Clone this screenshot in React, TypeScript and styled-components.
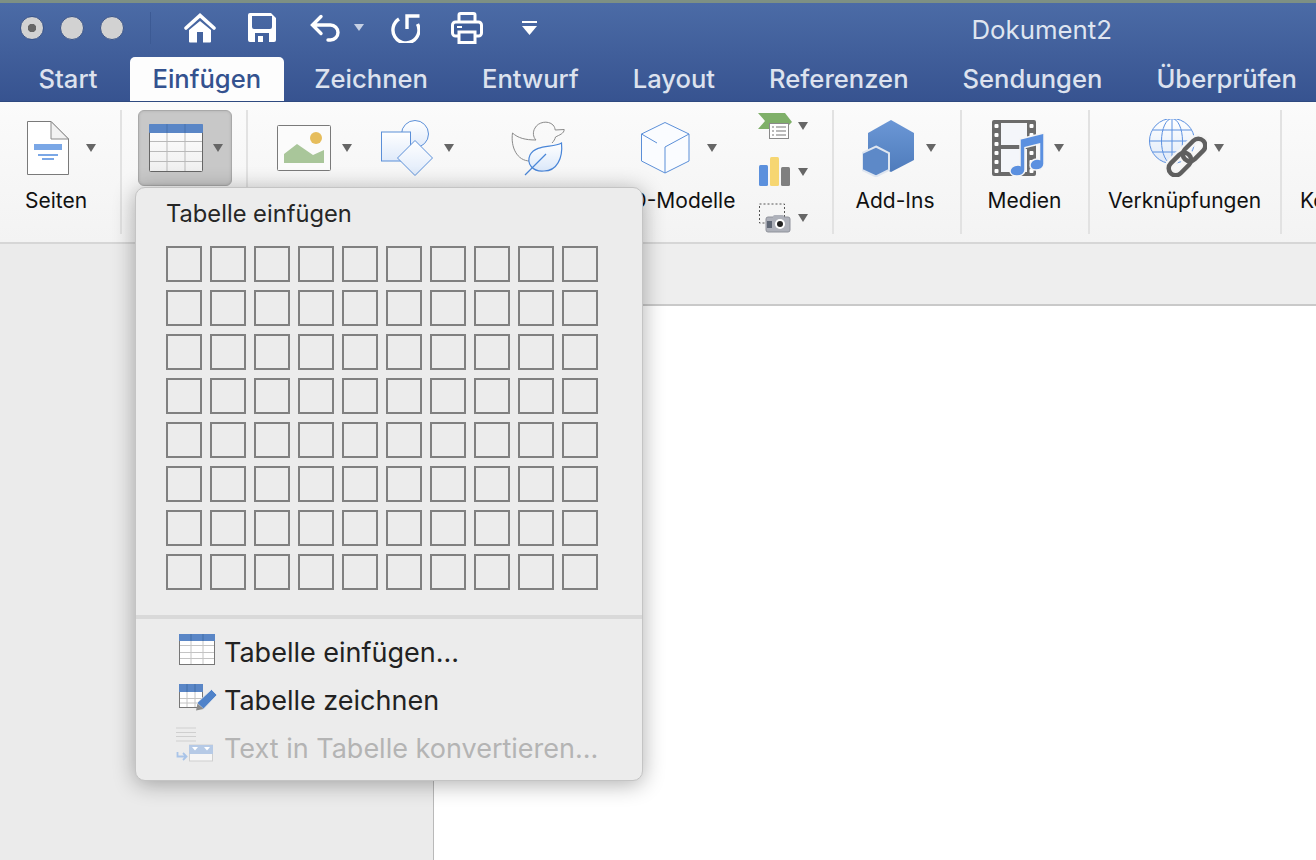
import React from "react";
import styled, { createGlobalStyle } from "styled-components";

const tabs = ["Start", "Einfügen", "Zeichnen", "Entwurf", "Layout", "Referenzen", "Sendungen", "Überprüfen"];
const cells = Array.from({ length: 80 }, (_, i) => i);

const HomeIcon = () => (
  <svg width="32" height="30" viewBox="0 0 32 30">
    <path d="M2 15 16 2.500 30 15" fill="none" stroke="#fff" strokeWidth="3.600" strokeLinecap="round" />
    <path d="M5 17 16 8l11 9v11.500a1 1 0 0 1-1 1h-7V19h-6v10.500H6a1 1 0 0 1-1-1z" fill="#fff" />
  </svg>
);

const SaveIcon = () => (
  <svg width="28" height="29" viewBox="0 0 28 29">
    <path
      fillRule="evenodd"
      d="M2 0h21l5 5v22a2 2 0 0 1-2 2H2a2 2 0 0 1-2-2V2a2 2 0 0 1 2-2zM4 3v11a2 2 0 0 0 2 2h16a2 2 0 0 0 2-2V3zM7 20v9h14v-9zM10 23h5v6h-5z"
      fill="#fff"
    />
  </svg>
);

const UndoIcon = () => (
  <svg width="30" height="28" viewBox="0 0 30 28">
    <path
      d="M11 2.500 2.500 11l8.500 8.500M3 11h17.500a7.500 7.500 0 0 1 0 15H18"
      fill="none"
      stroke="#fff"
      strokeWidth="3.400"
      strokeLinecap="round"
    />
  </svg>
);

const RedoIcon = () => (
  <svg width="30" height="30" viewBox="0 0 30 30">
    <path d="M9 6A13 13 0 1 0 27.500 11" fill="none" stroke="#fff" strokeWidth="3.400" />
    <path d="M29.500 3H17v13" fill="none" stroke="#fff" strokeWidth="3.400" />
  </svg>
);

const PrintIcon = () => (
  <svg width="32" height="32" viewBox="0 0 32 32">
    <rect x="8" y="1.500" width="16" height="11" rx="1.500" fill="none" stroke="#fff" strokeWidth="3" />
    <rect x="1.500" y="10" width="29" height="14" rx="3" fill="#3f5e9a" stroke="#fff" strokeWidth="3" />
    <rect x="6" y="14" width="5" height="2" fill="#fff" />
    <rect x="8" y="20" width="16" height="10.500" fill="#3f5e9a" stroke="#fff" strokeWidth="3" />
  </svg>
);

const CustomizeIcon = () => (
  <svg width="15" height="14" viewBox="0 0 15 14">
    <rect x="0" y="0" width="15" height="2" fill="#fff" />
    <path d="M0 5h15l-7.500 9z" fill="#fff" />
  </svg>
);

const PageIcon = () => (
  <svg width="42" height="54" viewBox="0 0 42 54">
    <path d="M.5.500H24L41.500 18v35.500H.5z" fill="#fff" stroke="#7a7a7a" />
    <path d="M24 .5V18h17.500z" fill="#f2f2f2" stroke="#8a8a8a" />
    <rect x="7" y="23" width="28" height="6" fill="#7aa7e6" />
    <rect x="11" y="33" width="20" height="2" fill="#7aa7e6" />
    <rect x="15" y="37" width="12" height="2" fill="#7aa7e6" />
  </svg>
);

const TableIcon = () => (
  <svg width="54" height="48" viewBox="0 0 54 48">
    <defs>
      <linearGradient id="cellFill" x1="0" y1="0" x2="0" y2="1">
        <stop offset="0" stopColor="#fff" />
        <stop offset="1" stopColor="#efefef" />
      </linearGradient>
    </defs>
    <rect x=".5" y=".5" width="53" height="47" rx="1" fill="url(#cellFill)" stroke="#666" />
    <rect x="0" y="0" width="54" height="9" rx="1" fill="#5a86c6" />
    <path d="M18 9v38M36 9v38M1 17.500h52M1 27.500h52M1 37.500h52" stroke="#b9b9b9" strokeWidth="1" />
    <path d="M18 0v9M36 0v9" stroke="#4872ad" strokeWidth="1" />
  </svg>
);

const PictureIcon = () => (
  <svg width="54" height="46" viewBox="0 0 54 46">
    <rect x=".5" y=".5" width="53" height="45" rx="1" fill="#fbfbfb" stroke="#7a7a7a" />
    <path d="M7 29 20 19l16 11 11-5v13H7z" fill="#a9c69a" />
    <circle cx="39" cy="13" r="6" fill="#e6bd5c" />
  </svg>
);

const ShapesIcon = () => (
  <svg width="52" height="56" viewBox="0 0 52 56">
    <defs>
      <linearGradient id="shapeFill" x1="0" y1="0" x2="0" y2="1">
        <stop offset="0" stopColor="#fff" />
        <stop offset="1" stopColor="#dfeafa" />
      </linearGradient>
    </defs>
    <circle cx="34" cy="14" r="13.500" fill="url(#shapeFill)" stroke="#5b8fd8" />
    <rect x=".5" y="12" width="29" height="29" fill="url(#shapeFill)" stroke="#5b8fd8" />
    <path d="M34 20.500 51.500 38 34 55.500 16.500 38z" fill="url(#shapeFill)" stroke="#5b8fd8" />
  </svg>
);

const DuckIcon = () => (
  <svg width="54" height="56" viewBox="0 0 54 56">
    <defs>
      <linearGradient id="leafFill" x1="0" y1="0" x2="0" y2="1">
        <stop offset="0" stopColor="#fff" />
        <stop offset="1" stopColor="#dbe8fa" />
      </linearGradient>
    </defs>
    <path
      d="M1.500 13C7 18 14 20 25 20c-3-3-3.500-8-1-12 3-6 13-8 18-3 1.500 1.500 2 3.500 2.200 5l9-.5c0 4-5 5.500-8.700 7.500-.5 2-1.500 4-3.500 6M1.500 13C-.5 27 6 41 19 41"
      fill="none"
      stroke="#8a8a8a"
    />
    <path d="M50.500 23C42 28 25 24 19 35c-4 9 3 17 14 16 13 0 19-13 17.500-28z" fill="url(#leafFill)" stroke="#4a86d8" strokeWidth="1.200" />
    <path d="M14 55 26 43c3-3 6-6 9-9" fill="none" stroke="#4a86d8" strokeWidth="1.200" />
  </svg>
);

const CubeIcon = () => (
  <svg width="49" height="52" viewBox="0 0 49 52">
    <path d="M24 .5 48 12v27L24 51 .5 39V12z" fill="#fafcff" stroke="#5b8fd8" />
    <path d="M48 12 24 25v26M.5 12 16 21" fill="none" stroke="#5b8fd8" />
  </svg>
);

const SmartArtIcon = () => (
  <svg width="34" height="28" viewBox="0 0 34 28">
    <path d="M0 1h27l7 9-7 7H0l7-8z" fill="#7fb069" />
    <rect x="11.500" y="11.500" width="19" height="15" fill="#fff" stroke="#8a8a8a" />
    <path d="M14 15h2M18 15h10M14 19h2M18 19h10M14 23h2M18 23h10" stroke="#777" strokeWidth="1.200" />
  </svg>
);

const ChartIcon = () => (
  <svg width="32" height="30" viewBox="0 0 32 30">
    <rect x="1" y="8" width="9" height="21" rx="1.500" fill="#5b90dd" />
    <rect x="12" y="0" width="9" height="29" rx="1.500" fill="#f6d672" />
    <rect x="23" y="10" width="9" height="19" rx="1.500" fill="#7f7f7f" />
  </svg>
);

const ScreenshotIcon = () => (
  <svg width="33" height="30" viewBox="0 0 33 30">
    <rect x="1.500" y="1" width="25" height="19" fill="none" stroke="#555" strokeDasharray="2 2" />
    <rect x="8" y="14" width="24" height="15" rx="2" fill="#aeb1ba" stroke="#8f929b" />
    <rect x="15" y="12" width="11" height="4" rx="1.500" fill="#aeb1ba" />
    <rect x="9" y="18" width="5" height="7" fill="#5e6674" />
    <circle cx="22" cy="21" r="5" fill="#fff" />
    <circle cx="22" cy="21" r="3" fill="#222" />
  </svg>
);

const AddInsIcon = () => (
  <svg width="52" height="57" viewBox="0 0 52 57">
    <defs>
      <linearGradient id="hexFill" x1="0" y1="0" x2="0" y2="1">
        <stop offset="0" stopColor="#6b97d6" />
        <stop offset="1" stopColor="#4f7cbc" />
      </linearGradient>
    </defs>
    <path d="M29 0 52 13v27L29 52 6 40V13z" fill="url(#hexFill)" />
    <path d="M14 26.500 27 33v17l-13 6.500L0 50V33z" fill="#5d89c8" stroke="#dfe6f0" strokeWidth="2" />
  </svg>
);

const MediaIcon = () => (
  <svg width="53" height="56" viewBox="0 0 53 56">
    <rect x="0" y="0" width="44" height="56" rx="2" fill="#6b6b6b" />
    <rect x="9" y="3" width="26" height="22" fill="#f4f6fa" />
    <rect x="9" y="29" width="26" height="23" fill="#f4f6fa" />
    {[4, 13, 22, 31, 40, 49].map((y) => (
      <React.Fragment key={y}>
        <rect x="2.500" y={y} width="4" height="4" rx="1" fill="#fff" />
        <rect x="37.500" y={y} width="4" height="4" rx="1" fill="#fff" />
      </React.Fragment>
    ))}
    <path
      d="M28 19 52 13v31c0 4-4 6-8 6s-6-2-6-5 3-6 7-6c1 0 2 .2 2.500.4V24L33 27.500V50c0 4-4 6-8 6s-7-2-7-5 3-6 8-6c.8 0 1.500.1 2 .3z"
      fill="#5b90e0"
      stroke="#f5f5f5"
      strokeWidth="1.500"
    />
  </svg>
);

const LinksIcon = () => (
  <svg width="58" height="58" viewBox="0 0 58 58">
    <defs>
      <linearGradient id="globeFill" x1="0" y1="0" x2="0" y2="1">
        <stop offset="0" stopColor="#fff" />
        <stop offset="1" stopColor="#dfe9f8" />
      </linearGradient>
    </defs>
    <circle cx="23" cy="22" r="22.500" fill="url(#globeFill)" stroke="#5b90e0" />
    <ellipse cx="23" cy="22" rx="10.500" ry="22.500" fill="none" stroke="#5b90e0" />
    <path d="M23 0v44M1 22h44M4 11h38M4 33h38" stroke="#5b90e0" fill="none" />
    <g transform="rotate(-45 38 38)" fill="none" stroke="#f5f5f5" strokeWidth="9">
      <rect x="15" y="31" width="26" height="14" rx="7" />
      <rect x="35" y="31" width="26" height="14" rx="7" />
    </g>
    <g transform="rotate(-45 38 38)" fill="none" stroke="#5f5f5f" strokeWidth="4.500">
      <rect x="15" y="31" width="26" height="14" rx="7" />
      <rect x="35" y="31" width="26" height="14" rx="7" />
    </g>
  </svg>
);

const MenuTableIcon = () => (
  <svg width="42" height="36" viewBox="0 2 42 36">
    <rect x="3.500" y="2.500" width="35" height="30" fill="#fff" stroke="#777" />
    <rect x="3" y="2" width="36" height="7" fill="#5a86c6" />
    <path d="M15 2v7M27 2v7" stroke="#436ea8" />
    <path d="M15 9v23M27 9v23M4 13.500h34M4 20.500h34M4 26.500h34" stroke="#c4c4c4" />
  </svg>
);

const MenuDrawIcon = () => (
  <svg width="42" height="36" viewBox="0 2 42 36">
    <rect x="3.500" y="4.500" width="23" height="23" fill="#fff" stroke="#777" />
    <rect x="3" y="4" width="24" height="8" fill="#5a86c6" />
    <path d="M11 4v8M19 4v8" stroke="#436ea8" />
    <path d="M11 12v15M19 12v15M4 18.500h22M4 23h22" stroke="#c4c4c4" />
    <path d="M35.500 9.500l5.500 5.500-13.500 14-6.500-6z" fill="#4f82c9" stroke="#ececec" strokeWidth=".8" />
    <path d="M20 30.500l1.500-7 6 5.500z" fill="#8a8a8a" />
  </svg>
);

const MenuConvertIcon = () => (
  <svg width="42" height="36" viewBox="0 3 42 36" overflow="visible">
    <path d="M0 1h20M0 5.500h20M0 9.500h20M0 14h20" stroke="#cfcfcf" strokeWidth="1.200" />
    <path d="M1.500 25v4.500H10M7 26l3.500 3.500L7 33" fill="none" stroke="#a9c4e8" strokeWidth="1.800" />
    <rect x="13.500" y="18" width="23" height="16" fill="#f6f6f6" stroke="#cfcfcf" />
    <rect x="13" y="18" width="24" height="9" fill="#b6cae6" />
    <path d="M16 20h6l-3 3.500zM28 20h6l-3 3.500z" fill="#fff" />
  </svg>
);

const App = () => {
  return (
    <Page>
      <GlobalStyle />
      <Header>
        <TitleRow>
          <Lights>
            <Light $active />
            <Light />
            <Light />
          </Lights>
          <TitleDivider />
          <QuickTools>
            <QuickSlot $left={33}>
              <HomeIcon />
            </QuickSlot>
            <QuickSlot $left={32}>
              <SaveIcon />
            </QuickSlot>
            <QuickSlot $left={34}>
              <UndoIcon />
              <TinyCaret />
            </QuickSlot>
            <QuickSlot $left={26}>
              <RedoIcon />
            </QuickSlot>
            <QuickSlot $left={31}>
              <PrintIcon />
            </QuickSlot>
            <QuickSlot $left={39}>
              <CustomizeIcon />
            </QuickSlot>
          </QuickTools>
          <DocTitle>Dokument2</DocTitle>
        </TitleRow>
        <Tabs>
          {tabs.map((tab) => (
            <Tab key={tab} $active={tab === "Einfügen"}>
              {tab}
            </Tab>
          ))}
        </Tabs>
      </Header>

      <Ribbon>
        <Group $width={122}>
          <Tool $width={112}>
            <ToolIcons $inset={27} $gap={17}>
              <PageIcon />
              <Caret />
            </ToolIcons>
            <Label>Seiten</Label>
          </Tool>
        </Group>
        <Group $width={126}>
          <PressedButton>
            <TableIcon />
            <Caret />
          </PressedButton>
        </Group>
        <Group $width={586}>
          <Tool $width={117}>
            <ToolIcons $inset={29} $gap={11}>
              <PictureIcon />
              <Caret />
            </ToolIcons>
          </Tool>
          <Tool $width={115}>
            <ToolIcons $inset={16} $gap={11}>
              <ShapesIcon />
              <Caret />
            </ToolIcons>
          </Tool>
          <Tool $width={120}>
            <ToolIcons $inset={31} $gap={0}>
              <DuckIcon />
            </ToolIcons>
          </Tool>
          <Tool $width={154}>
            <ToolIcons $inset={41} $gap={17}>
              <CubeIcon />
              <Caret />
            </ToolIcons>
            <Label>3D-Modelle</Label>
          </Tool>
          <SmallTools>
            <SmallTool>
              <SmartArtIcon />
              <Caret />
            </SmallTool>
            <SmallTool>
              <ChartIcon />
              <Caret />
            </SmallTool>
            <SmallTool>
              <ScreenshotIcon />
              <Caret />
            </SmallTool>
          </SmallTools>
        </Group>
        <Group $width={128}>
          <Tool $width={122}>
            <ToolIcons $inset={28} $gap={12}>
              <AddInsIcon />
              <Caret />
            </ToolIcons>
            <Label>Add-Ins</Label>
          </Tool>
        </Group>
        <Group $width={128}>
          <Tool $width={125}>
            <ToolIcons $inset={30} $gap={9}>
              <MediaIcon />
              <Caret />
            </ToolIcons>
            <Label>Medien</Label>
          </Tool>
        </Group>
        <Group $width={192}>
          <Tool $width={189}>
            <ToolIcons $inset={59} $gap={7}>
              <LinksIcon />
              <Caret />
            </ToolIcons>
            <Label>Verknüpfungen</Label>
          </Tool>
        </Group>
        <LastGroup>
          <ToolIcons $inset={0} $gap={0} />
          <Label>Kommentar</Label>
        </LastGroup>
      </Ribbon>

      <Workspace>
        <Sheet />
      </Workspace>

      <Menu>
        <MenuTitle>Tabelle einfügen</MenuTitle>
        <CellGrid>
          {cells.map((cell) => (
            <Cell key={cell} />
          ))}
        </CellGrid>
        <MenuDivider />
        <MenuItem>
          <MenuTableIcon />
          Tabelle einfügen...
        </MenuItem>
        <MenuItem>
          <MenuDrawIcon />
          Tabelle zeichnen
        </MenuItem>
        <MenuItem $disabled>
          <MenuConvertIcon />
          Text in Tabelle konvertieren...
        </MenuItem>
      </Menu>
    </Page>
  );
};

export default App;

const GlobalStyle = createGlobalStyle`
  html,
  body {
    margin: 0;
    padding: 0;
    background: #ebebeb;
    font-family: Inter, "Liberation Sans", sans-serif;
  }
`;

const Page = styled.div`
  position: relative;
  width: 1316px;
  height: 860px;
  overflow: hidden;
  display: flex;
  flex-direction: column;
`;

const Header = styled.header`
  height: 102px;
  box-sizing: border-box;
  border-top: 3px solid #7d9084;
  border-bottom: 1px solid #2f4a80;
  background: linear-gradient(#4b6ba6, #375390);
  display: flex;
  flex-direction: column;
`;

const TitleRow = styled.div`
  height: 55px;
  box-sizing: border-box;
  padding: 0 0 5px 20px;
  display: flex;
  align-items: center;
`;

const Lights = styled.div`
  display: flex;
  gap: 16px;
`;

const Light = styled.span<{ $active?: boolean }>`
  width: 24px;
  height: 24px;
  box-sizing: border-box;
  border-radius: 50%;
  border: 1px solid #3a5488;
  background: ${(p) =>
    p.$active ? "radial-gradient(circle, #666 0 4px, #d2d2d2 4.500px)" : "#d2d2d2"};
`;

const TitleDivider = styled.span`
  width: 1px;
  height: 32px;
  margin-left: 26px;
  background: #3c5a94;
`;

const QuickTools = styled.div`
  display: flex;
  align-items: center;
`;

const QuickSlot = styled.div<{ $left: number }>`
  display: flex;
  align-items: center;
  margin-left: ${(p) => p.$left}px;
`;

const TinyCaret = styled.span`
  width: 0;
  height: 0;
  margin-left: 14px;
  border-left: 5px solid transparent;
  border-right: 5px solid transparent;
  border-top: 7px solid #c6d0e4;
`;

const DocTitle = styled.div`
  margin: 4px 204px 0 auto;
  color: #dfe5f0;
  font-size: 25.800px;
  white-space: nowrap;
`;

const Tabs = styled.nav`
  display: flex;
  gap: 7px;
  padding-left: 15px;
  height: 44px;
`;

const Tab = styled.div<{ $active?: boolean }>`
  height: 44px;
  padding: 0 ${(p) => (p.$active ? "22.500px" : "23.500px")};
  margin-left: ${(p) => (p.$active ? "2px" : "0")};
  line-height: 44px;
  font-size: 25.600px;
  font-weight: 500;
  border-radius: 5px 5px 0 0;
  white-space: nowrap;
  color: ${(p) => (p.$active ? "#34528f" : "#dde2ee")};
  background: ${(p) => (p.$active ? "#fdfdfd" : "transparent")};
`;

const Ribbon = styled.div`
  height: 142px;
  box-sizing: border-box;
  padding-top: 8px;
  display: flex;
  align-items: flex-start;
  background: linear-gradient(#fbfbfb, #f3f3f3);
  border-bottom: 2px solid #d6d6d6;
`;

const Group = styled.section<{ $width: number }>`
  flex: none;
  width: ${(p) => p.$width}px;
  height: 124px;
  box-sizing: border-box;
  display: flex;
  border-right: 2px solid #e2e2e2;
`;

const LastGroup = styled.section`
  flex: none;
  padding-left: 18px;
`;

const Tool = styled.div<{ $width: number }>`
  flex: none;
  width: ${(p) => p.$width}px;
  display: flex;
  flex-direction: column;
  align-items: center;
`;

const ToolIcons = styled.div<{ $inset: number; $gap: number }>`
  align-self: stretch;
  height: 76px;
  display: flex;
  align-items: center;
  padding-left: ${(p) => p.$inset}px;
  gap: ${(p) => p.$gap}px;
`;

const Caret = styled.span`
  flex: none;
  width: 0;
  height: 0;
  border-left: 5.500px solid transparent;
  border-right: 5.500px solid transparent;
  border-top: 8px solid #666;
`;

const Label = styled.div`
  margin-top: 3px;
  line-height: 24px;
  font-size: 21px;
  color: #111;
  white-space: nowrap;
`;

const PressedButton = styled.button`
  width: 94px;
  height: 76px;
  margin-left: 16px;
  padding: 0 0 0 10px;
  box-sizing: border-box;
  display: flex;
  align-items: center;
  gap: 10px;
  background: #c8c8c8;
  border: 1px solid #a9a9a9;
  border-radius: 6px;
  box-shadow: inset 0 0 3px rgba(0, 0, 0, 0.12);
`;

const SmallTools = styled.div`
  padding: 1px 0 0 4px;
  display: flex;
  flex-direction: column;
  gap: 16px;
`;

const SmallTool = styled.div`
  height: 30px;
  width: 51px;
  display: grid;
  grid-template-columns: 40px 11px;
  align-items: center;
`;

const Workspace = styled.main`
  flex: 1;
  padding: 60px 0 0 433px;
  display: flex;
  background: linear-gradient(90deg, #ebebeb 0 433px, #eeeeee 433px);
`;

const Sheet = styled.div`
  flex: 1;
  background: #fff;
  border-top: 2px solid #c9c9c9;
  border-left: 1px solid #b9b9b9;
`;

const Menu = styled.div`
  position: absolute;
  left: 135px;
  top: 187px;
  width: 508px;
  height: 594px;
  box-sizing: border-box;
  padding-top: 12px;
  background: #ececec;
  border: 1px solid #c4c4c4;
  border-radius: 10px;
  box-shadow: 0 3px 22px rgba(0, 0, 0, 0.32);
`;

const MenuTitle = styled.div`
  margin-left: 30px;
  line-height: 28px;
  font-size: 23.700px;
  color: #262626;
`;

const CellGrid = styled.div`
  margin: 18px 0 0 30px;
  display: grid;
  grid-template-columns: repeat(10, 36px);
  grid-auto-rows: 36px;
  gap: 8px;
`;

const Cell = styled.div`
  box-sizing: border-box;
  border: 2px solid #808080;
`;

const MenuDivider = styled.div`
  height: 4px;
  margin: 25px 0 9px;
  background: #d9d9d9;
`;

const MenuItem = styled.div<{ $disabled?: boolean }>`
  height: 48px;
  padding-left: 40px;
  display: flex;
  align-items: center;
  gap: 6px;
  font-size: 27px;
  white-space: nowrap;
  color: ${(p) => (p.$disabled ? "#b4b4b4" : "#222")};
`;
